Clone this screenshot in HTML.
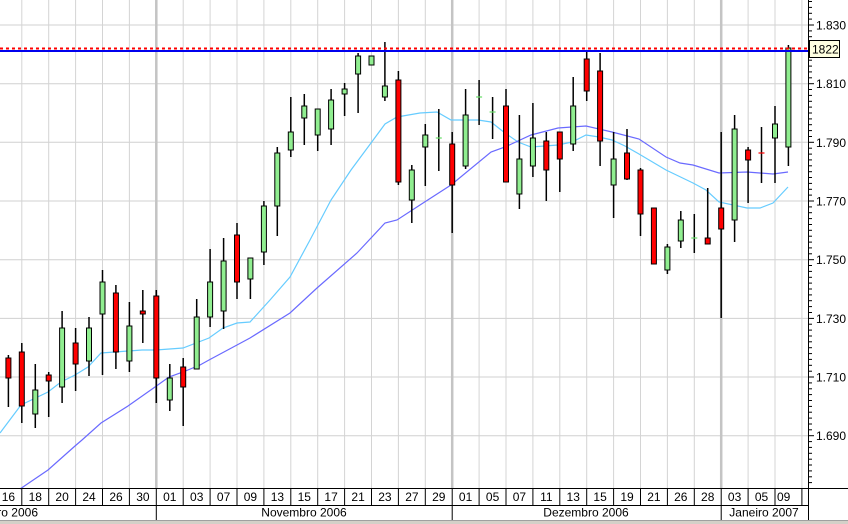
<!DOCTYPE html>
<html><head><meta charset="utf-8">
<style>
html,body{margin:0;padding:0;background:#fff;}
body{width:848px;height:524px;overflow:hidden;position:relative;font-family:"Liberation Sans",Arial,sans-serif;}
svg{position:absolute;left:0;top:0;}
text{font-family:"Liberation Sans",Arial,sans-serif;font-size:12px;fill:#000;}
</style></head><body>
<svg id="s" width="848" height="524" viewBox="0 0 848 524" xmlns="http://www.w3.org/2000/svg"></svg>
<script>
var S=document.getElementById('s');var h='';
function L(x1,y1,x2,y2,c,w,extra){h+='<line x1="'+x1+'" y1="'+y1+'" x2="'+x2+'" y2="'+y2+'" stroke="'+c+'" stroke-width="'+w+'" '+(extra||'')+'/>';}
// horizontal gridlines
var labels=['1.830','1.810','1.790','1.770','1.750','1.730','1.710','1.690'];
for(var i=0;i<8;i++){var y=25+i*58.67;L(0,y.toFixed(1),808,y.toFixed(1),'#d0d0d0',1);}
// vertical gridlines
for(var k=0;k<30;k++){var x=21.8+26.9*k;var thick=(k==5||k==16||k==26);L(x.toFixed(1),0,x.toFixed(1),488,thick?'#c4c4c4':'#d4d4d4',thick?2.5:1);}
// MAs
function P(pts,c){h+='<polyline fill="none" stroke="'+c+'" stroke-width="1.2" points="'+pts+'"/>';}
P('0,433 21,405 48,392 61,382 75,375 88,367 101,353 115,352 142,350 156,350 183,348 209,338 223,328 237,323 250,322 270,300 290,277 310,240 331,200 351,170 371,143 385,124 397,117 420,113 437,112 451,120 478,120 491,122 505,133 518,142 531,147 558,145 572,142 586,135 599,137 612,140 625,146 639,154 666,170 693,183 706,190 719,202 747,208 760,208 773,203 788,187','#66ccff');
P('20,489 48,470 75,446 82,440 101,423 128,406 155,387 169,377 183,372 200,365 209,360 237,345 250,338 290,313 317,288 357,253 385,223 397,220 420,205 451,185 491,152 505,147 531,135 558,128 586,126 612,132 639,139 666,157 680,163 693,165 719,173 747,172 773,174 788,172','#6a6aff');
// candles [high,low,top,bottom,color]
var C=[[355,407,358,378,'r'],[343,423,352,406,'r'],[364,428,390,414,'g'],[372,417,375,381,'r'],[311,403,328,387,'g'],[328,391,343,364,'r'],[317,376,328,361,'g'],[270,375,282,314,'g'],[285,369,293,352,'r'],[302,372,326,361,'g'],[290,343,311,314,'r'],[290,403,296,378,'r'],[364,411,378,400,'g'],[358,426,367,387,'r'],[299,369,317,369,'g'],[249,327,282,317,'g'],[238,329,261,311,'g'],[223,299,235,282,'r'],[258,299,258,279,'g'],[201,265,206,252,'g'],[147,236,153,206,'g'],[97,157,132,150,'g'],[94,145,106,118,'g'],[109,151,109,135,'g'],[89,145,100,129,'g'],[83,116,89,94,'g'],[53,113,56,74,'g'],[56,65,56,65,'g'],[42,101,86,97,'g'],[71,185,80,182,'r'],[165,223,170,200,'g'],[124,186,135,147,'g'],[109,171,138,138,'gd'],[132,233,144,185,'r'],[89,169,115,166,'g'],[80,125,97,97,'gd'],[97,139,112,112,'gd'],[89,182,106,182,'r'],[115,209,159,194,'g'],[103,177,138,166,'g'],[132,201,141,170,'r'],[132,192,132,159,'r'],[77,151,106,144,'g'],[50,101,59,91,'r'],[53,166,71,141,'r'],[132,218,159,185,'g'],[129,180,153,179,'r'],[168,236,170,214,'r'],[208,264,208,264,'r'],[244,274,247,270,'g'],[211,248,220,241,'g'],[214,253,238,238,'gd'],[188,244,238,244,'r'],[132,318,208,229,'r'],[115,242,129,220,'g'],[147,203,150,160,'r'],[127,183,153,153,'rd'],[106,183,124,138,'g'],[45,166,48,147,'g']];
for(var i=0;i<C.length;i++){var c=C[i];var x=21.8+13.45*(i-1);
 L(x.toFixed(1),c[0],x.toFixed(1),c[1],'#000',1.5);
 if(c[4].length>1){L((x-3).toFixed(1),c[2],(x+3).toFixed(1),c[2],c[4][0]=='g'?'#66dd66':'#ff0000',1.2);}
 else{var hh=Math.max(c[3]-c[2],3);h+='<rect x="'+(x-2.5).toFixed(1)+'" y="'+c[2]+'" width="5" height="'+hh+'" fill="'+(c[4]=='g'?'#90ee90':'#ff0000')+'" stroke="#000" stroke-width="1"/>';}
}
// horizontal level lines
L(0,48.5,808,48.5,'#ff0000',2,'stroke-dasharray="3 3"');
L(0,51,808,51,'#0000ee',2);
// right axis
L(808.5,0,808.5,488,'#000',1);
for(var v=0;v<90;v++){var y=25+(v-10)*5.867;if(y<0||y>488)continue;var maj=(v%10==0);L(808,y.toFixed(1),maj?814:812,y.toFixed(1),'#000',1);}
for(var i=0;i<8;i++){var y=25+i*58.67;h+='<text x="816" y="'+(y+4.5).toFixed(1)+'">'+labels[i]+'</text>';}
h+='<rect x="809.5" y="40.5" width="30" height="17" fill="#ffffe1" stroke="#000" stroke-width="1"/><text x="812" y="53.5">1822</text>';
// bottom axis
L(0,488.5,848,488.5,'#000',1);
L(0,505.5,808,505.5,'#000',1);
L(808.5,488,808.5,520,'#000',1);
var days=['16','18','20','24','26','30','01','03','07','09','13','15','17','21','23','27','29','01','05','07','11','13','15','19','21','26','28','03','05','09'];
for(var k=0;k<30;k++){var gx=21.8+26.9*k;L(gx.toFixed(1),488,gx.toFixed(1),505,'#000',1);
 var cx=gx-13.45; if(k==29){h+='<text x="777" y="501">09</text>';continue;}
 h+='<text x="'+cx.toFixed(1)+'" y="501" text-anchor="middle">'+days[k]+'</text>';}
[156.3,452.2,721.2].forEach(function(x){L(x,505,x,520,'#000',1);});
h+='<text x="38" y="516.5" text-anchor="end">Outubro 2006</text>';
h+='<text x="304" y="516.5" text-anchor="middle">Novembro 2006</text>';
h+='<text x="586" y="516.5" text-anchor="middle">Dezembro 2006</text>';
h+='<text x="764" y="516.5" text-anchor="middle">Janeiro 2007</text>';
h+='<rect x="0" y="520" width="848" height="4" fill="#d4d0c8"/><line x1="0" y1="520.5" x2="848" y2="520.5" stroke="#a0a0a0"/>';
S.innerHTML=h;
</script>
</body></html>
